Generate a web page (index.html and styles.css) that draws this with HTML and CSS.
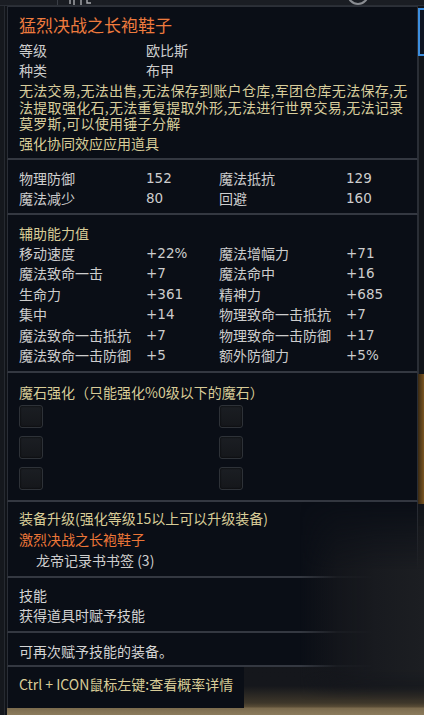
FILE: index.html
```html
<!DOCTYPE html>
<html lang="zh">
<head>
<meta charset="utf-8">
<link rel="stylesheet" href="styles.css">
</head>
<body>
<div class="screen">
  <div class="topbar">
    <span class="tab-div"></span>
    <svg class="tab-glyph" width="24" height="6" viewBox="0 0 24 6"><path d="M2 0v4M6 0v5M13 0v5M19 0v3h4" stroke="#a9abaf" stroke-width="1.4" fill="none"/></svg>
    <span class="search"></span>
  </div>
  <div class="main">
    <div class="leftedge"></div>
    <div class="tooltip">
      <section class="sec s1">
        <div class="title">猛烈决战之长袍鞋子</div>
        <div class="grid2"><span>等级</span><span>欧比斯</span></div>
        <div class="grid2"><span>种类</span><span>布甲</span></div>
        <p class="desc">无法交易,无法出售,无法保存到账户仓库,军团仓库无法保存,无法提取强化石,无法重复提取外形,无法进行世界交易,无法记录莫罗斯,可以使用锤子分解</p>
        <div class="tan line20">强化协同效应应用道具</div>
      </section>
      <section class="sec s2">
        <div class="grid4">
          <span>物理防御</span><span class="num">152</span><span>魔法抵抗</span><span class="num">129</span>
          <span>魔法减少</span><span class="num">80</span><span>回避</span><span class="num">160</span>
        </div>
      </section>
      <section class="sec s3">
        <div class="tan line20">辅助能力值</div>
        <div class="grid4 tight">
          <span>移动速度</span><span class="num">+22%</span><span>魔法增幅力</span><span class="num">+71</span>
          <span>魔法致命一击</span><span class="num">+7</span><span>魔法命中</span><span class="num">+16</span>
          <span>生命力</span><span class="num">+361</span><span>精神力</span><span class="num">+685</span>
          <span>集中</span><span class="num">+14</span><span>物理致命一击抵抗</span><span class="num">+7</span>
          <span>魔法致命一击抵抗</span><span class="num">+7</span><span>物理致命一击防御</span><span class="num">+17</span>
          <span>魔法致命一击防御</span><span class="num">+5</span><span>额外防御力</span><span class="num">+5%</span>
        </div>
      </section>
      <section class="sec s4">
        <div class="tan line20">魔石强化（只能强化%0级以下的魔石）</div>
        <div class="slots">
          <span class="slot"></span><span class="slot"></span>
          <span class="slot"></span><span class="slot"></span>
          <span class="slot"></span><span class="slot"></span>
        </div>
      </section>
      <section class="sec s5">
        <div class="tan">装备升级(强化等级15以上可以升级装备)</div>
        <div class="orange">激烈决战之长袍鞋子</div>
        <div class="indent">龙帝记录书书签 (3)</div>
      </section>
      <section class="sec s6">
        <div class="line20">技能</div>
        <div class="line20">获得道具时赋予技能</div>
      </section>
      <section class="sec s7">
        <div class="line20">可再次赋予技能的装备。</div>
      </section>
      <section class="sec s8">
        <div class="tan line20 nowrap">Ctrl + ICON鼠标左键:查看概率详情</div>
      </section>
    </div>
    <div class="rightedge">
      <span class="blue"></span>
      <span class="dark1"></span>
      <span class="brown"></span>
    </div>
  </div>
  <div class="fade"></div>
</div>
</body>
</html>
```

FILE: styles.css
```css
* { box-sizing: border-box; }
html, body {
  margin: 0;
  padding: 0;
}
body {
  width: 424px;
  height: 715px;
  overflow: hidden;
  font-family: "Noto Sans CJK SC", "Noto Sans", sans-serif;
  font-size: 14px;
  color: #cdcdcd;
  background: linear-gradient(to bottom, #121419 0px, #15171c 686px, #3e372a 703px, #5a4d37 707px, #7b6b4e 708px, #8c7c5c 715px);
}
.screen {
  position: relative;
  width: 424px;
  height: 715px;
}
.topbar {
  height: 6px;
  background: #1a1d23;
  display: flex;
  overflow: hidden;
  border-bottom: 1px solid #2a2e35;
}
.tab-div {
  width: 1px;
  margin-left: 57px;
  background: #3a3e46;
}
.tab-glyph {
  margin-left: 10px;
  display: block;
}
.search {
  margin-left: 255px;
  width: 22px;
  height: 22px;
  margin-top: -17px;
  border: 2px solid #8a8d92;
  border-radius: 50%;
}
.main {
  display: flex;
  align-items: flex-start;
}
.leftedge {
  width: 7px;
  height: 709px;
  background: linear-gradient(to right, #15181d 0, #15181d 4px, #262a31 4px, #262a31 5px, #101318 5px);
}
.tooltip {
  width: 411px;
}
.sec {
  background: #0a0e16;
  border-bottom: 2px solid #343841;
  border-left: 1px solid #2a2e36;
  border-right: 1px solid #2a2e36;
  padding-left: 11px;
  padding-right: 8px;
}
.s1 {
  border-top: 1px solid #2c3038;
  padding-top: 7px;
  padding-bottom: 5px;
}
.title {
  font-size: 17px;
  line-height: 22px;
  color: #ee7b3e;
  margin-bottom: 4px;
}
.grid2 {
  display: grid;
  grid-template-columns: 127px 1fr;
  line-height: 20px;
}
.desc {
  margin: 2px 0 1px;
  line-height: 16.5px;
  color: #d8cd9c;
  letter-spacing: 0.3px;
}
.tan { color: #d8cc97; }
.orange { color: #ec7638; }
.line20 { line-height: 20px; }
.nowrap { white-space: nowrap; }
.num {
  font-family: "DejaVu Sans", "Noto Sans", sans-serif;
  font-size: 13.5px;
}
.s2 {
  padding-top: 8px;
  padding-bottom: 5px;
}
.grid4 {
  display: grid;
  grid-template-columns: 127px 73px 127px 1fr;
  line-height: 20px;
}
.grid4.tight { line-height: 20.5px; }
.s3 {
  padding-top: 8px;
  padding-bottom: 5px;
}
.s4 {
  padding-top: 9px;
  padding-bottom: 10px;
}
.slots {
  margin-top: 3px;
  display: grid;
  grid-template-columns: 200px 24px;
  grid-auto-rows: 23px;
  row-gap: 8px;
}
.slot {
  width: 24px;
  height: 23px;
  border-radius: 3px;
  background: linear-gradient(#1b1e23, #15171b);
  border: 1px solid #2e3238;
  box-shadow: inset 0 0 2px #000;
}
.s5 {
  padding-top: 6px;
  padding-bottom: 5px;
  line-height: 21px;
}
.indent { padding-left: 17px; }
.s6 {
  padding-top: 7px;
  padding-bottom: 6px;
  color: #d4d4d4;
}
.s7 {
  padding-top: 8px;
  padding-bottom: 4px;
  color: #d4d4d4;
}
.s8 {
  width: 237px;
  padding-top: 7px;
  padding-bottom: 14px;
  border-bottom: none;
  border-right: none;
}
.rightedge {
  width: 6px;
  display: flex;
  flex-direction: column;
  background: #111419;
  height: 520px;
}
.blue {
  margin-top: 2px;
  height: 48px;
  border: 2px solid #3d8fe0;
  border-right: none;
  background: #0e1522;
}
.dark1 {
  height: 318px;
  border-left: 1px solid #2a2e35;
}
.brown {
  height: 130px;
  background: linear-gradient(to right, #3a2a14, #7a5520);
}
.fade {
  position: absolute;
  left: 300px;
  top: 500px;
  width: 124px;
  height: 200px;
  background: linear-gradient(to right, rgba(20,22,27,0) 0%, rgba(21,23,28,0.85) 30%, #181a1f 60%, #1c1e22 100%);
  -webkit-mask-image: linear-gradient(to bottom, transparent 0, #000 70px, #000 170px, transparent 200px);
  mask-image: linear-gradient(to bottom, transparent 0, #000 70px, #000 170px, transparent 200px);
}
```
